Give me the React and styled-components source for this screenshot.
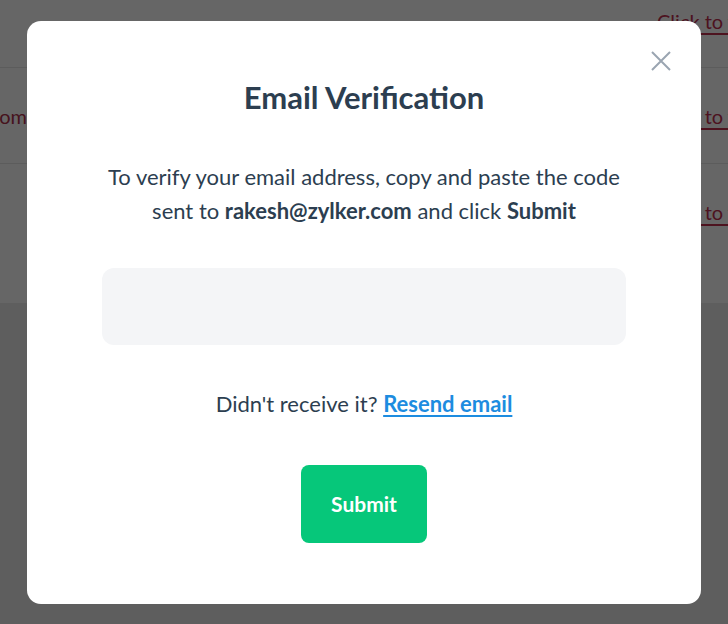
import React from 'react';
import styled, { createGlobalStyle } from 'styled-components';

const GlobalStyle = createGlobalStyle`
    html, body {
        margin: 0;
        padding: 0;
        height: 100%;
        overflow: hidden;
        font-family: Lato, "Open Sans", sans-serif;
    }
`;

const Page = styled.div`
    height: 624px;
    background-color: #ebebeb;
`;

const Table = styled.div`
    background-color: #fff;
    height: 303px;
`;

const Row = styled.div`
    display: flex;
    justify-content: space-between;
    align-items: ${({ first }) => (first ? 'flex-start' : 'center')};
    height: ${({ first }) => (first ? 68 : 96)}px;
    padding-top: ${({ first }) => (first ? 9 : 0)}px;
    box-sizing: border-box;
    border-bottom: 1px solid #e6e6e6;
    font-size: 20px;
    line-height: 24px;
    &:last-child {
        border-bottom: none;
    }
`;

const EmailCell = styled.div`
    width: 27px;
    display: flex;
    justify-content: flex-end;
    white-space: nowrap;
    color: #b0304c;
`;

const ActionCell = styled.a`
    width: 71px;
    white-space: nowrap;
    color: #c0304f;
    text-decoration: underline;
    text-underline-offset: 4px;
`;

const Overlay = styled.div`
    position: fixed;
    inset: 0;
    background-color: rgba(0, 0, 0, 0.6);
    display: flex;
    align-items: center;
    justify-content: center;
`;

const Modal = styled.div`
    position: relative;
    width: 674px;
    box-sizing: border-box;
    padding: 57px 75px 61px;
    background-color: #fff;
    border-radius: 14px;
    display: flex;
    flex-direction: column;
    align-items: center;
    color: #2c3e50;
`;

const CloseButton = styled.button`
    position: absolute;
    top: 29px;
    right: 29px;
    width: 22px;
    height: 22px;
    padding: 0;
    border: none;
    background: none;
    cursor: pointer;
`;

const Title = styled.h2`
    margin: 0;
    font-size: 31px;
    line-height: 38px;
    font-weight: 700;
`;

const Text = styled.p`
    margin: ${({ top }) => top}px 0 0;
    font-size: 22px;
    line-height: 34px;
    text-align: center;
`;

const CodeInput = styled.input`
    margin-top: 40px;
    width: 100%;
    height: 77px;
    box-sizing: border-box;
    border: none;
    border-radius: 12px;
    background-color: #f4f5f7;
    outline: none;
    font-family: inherit;
    font-size: 22px;
    text-align: center;
`;

const Link = styled.a`
    color: #1d8ce0;
    font-weight: 700;
    text-decoration: underline;
    text-underline-offset: 3px;
`;

const SubmitButton = styled.button`
    margin-top: 44px;
    width: 126px;
    height: 78px;
    border: none;
    border-radius: 8px;
    background-color: #06c77a;
    color: #fff;
    font-family: inherit;
    font-size: 21px;
    font-weight: 700;
    cursor: pointer;
`;

const rows = ['', 'rakesh@zylker.com', ''];

export default () => (
    <>
        <GlobalStyle />
        <Page>
            <Table>
                {rows.map((email, i) => (
                    <Row key={i} first={i === 0}>
                        <EmailCell>{email}</EmailCell>
                        <ActionCell>Click to verify</ActionCell>
                    </Row>
                ))}
            </Table>
        </Page>
        <Overlay>
            <Modal>
                <CloseButton aria-label="Close">
                    <svg width="22" height="22" viewBox="0 0 22 22">
                        <path d="M2 2 L20 20 M20 2 L2 20" stroke="#9aa5b1" strokeWidth="2" />
                    </svg>
                </CloseButton>
                <Title>Email Verification</Title>
                <Text top={44}>
                    To verify your email address, copy and paste the code
                    <br />
                    sent to <b>rakesh@zylker.com</b> and click <b>Submit</b>
                </Text>
                <CodeInput />
                <Text top={42}>
                    Didn't receive it? <Link href="#">Resend email</Link>
                </Text>
                <SubmitButton>Submit</SubmitButton>
            </Modal>
        </Overlay>
    </>
);
